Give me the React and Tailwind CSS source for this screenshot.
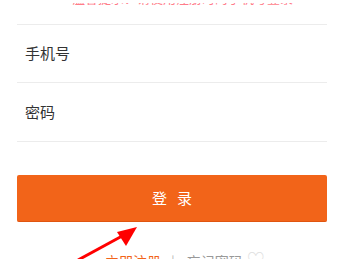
import React from "react";

export default function App() {
  return (
    <div
      className="relative w-[344px] h-[259px] overflow-hidden bg-white"
      style={{ fontFamily: '"Noto Sans CJK SC", "Noto Sans", sans-serif' }}
    >
      {/* clipped hint at top */}
      <div className="mt-[3px] h-[2px] overflow-hidden px-[72px]">
        <div className="-mt-[14px] text-[13px] leading-[18px] text-[#ff7d8a] whitespace-nowrap">
          温馨提示：请使用注册时的手机号登录
        </div>
      </div>

      <div className="px-[17px]">
        <div className="mt-[19px] border-t border-[#ececec]">
          <div className="h-[58px] flex items-center pl-[8px] border-b border-[#ececec] text-[15px] text-[#333]">
            手机号
          </div>
          <div className="h-[59px] flex items-center pl-[8px] border-b border-[#ececec] text-[15px] text-[#333]">
            密码
          </div>
        </div>

        <button className="mt-[33px] w-full h-[47px] bg-[#f26419] border-b border-[#e05510] rounded-[2px] text-white text-[15px] tracking-[10px] pl-[10px]">
          登录
        </button>

        <div className="mt-[29px] pl-[88px] text-[14px] leading-[20px] whitespace-nowrap flex items-center">
          <span className="text-[#f26419]">立即注册</span>
          <span className="ml-[10px] text-[#bbb]">|</span>
          <span className="ml-[12px] text-[#999]">忘记密码</span>
          <span className="ml-[4px] -mt-[4px] text-[#e0e0e0] text-[18px]">♡</span>
        </div>
      </div>

      {/* red annotation arrow */}
      <svg className="absolute left-0 top-0" width="344" height="259" viewBox="0 0 344 259">
        <line x1="78" y1="260" x2="124" y2="235" stroke="#ff0000" strokeWidth="3" />
        <polygon points="137,227 117,232 126,246" fill="#ff0000" />
      </svg>
    </div>
  );
}
